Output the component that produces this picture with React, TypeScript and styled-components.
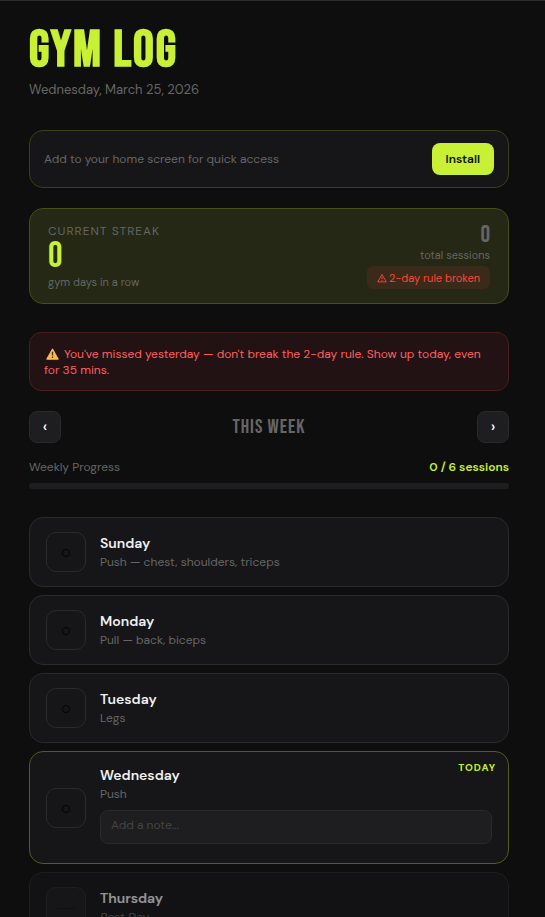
import React, { useState } from "react";
import styled, { createGlobalStyle, css } from "styled-components";

const accent = "#c8f135";
const muted = "#666666";
const line = "#2a2a2d";
const display = `"Bebas Neue", "Liberation Sans Narrow", "Liberation Sans", sans-serif`;

const GlobalStyle = createGlobalStyle`
  *, *::before, *::after { box-sizing: border-box; }
  html { background: #0e0e0e; overflow-x: hidden; scrollbar-width: none; }
  body {
    margin: 0;
    background: #0e0e0e;
    color: #f0f0f0;
    font-family: "DM Sans", Inter, "Open Sans", sans-serif;
    font-size: 13px;
    line-height: 20px;
  }
  button, textarea { font: inherit; color: inherit; margin: 0; }
  h1, h2, h3, p, ul { margin: 0; padding: 0; font-weight: inherit; }
`;

const Page = styled.main`
  border-top: 1px solid #2c2c30;
  padding: 22px 36px 40px 29px;
`;

const Header = styled.header`
  margin-bottom: 30px;
`;

const Title = styled.h1`
  font-family: ${display};
  font-size: 52px;
  font-weight: 700;
  letter-spacing: 2px;
  line-height: 56px;
  color: ${accent};
`;

const DateLine = styled.p`
  margin-top: 1px;
  color: ${muted};
`;

const Card = styled.section`
  border: 1px solid ${line};
  border-radius: 14px;
  background: #161618;
`;

const InstallCard = styled(Card)`
  display: flex;
  align-items: center;
  justify-content: space-between;
  padding: 12px 14px;
  margin-bottom: 20px;
  border-color: #383f1c;
  font-size: 12px;
  color: ${muted};
`;

const InstallButton = styled.button`
  height: 32px;
  padding: 0 14px;
  border: 0;
  border-radius: 8px;
  background: ${accent};
  color: #0e0e0e;
  font-size: 12px;
  font-weight: 600;
  cursor: pointer;
`;

const StreakCard = styled(Card)`
  display: flex;
  justify-content: space-between;
  padding: 14px 18px 13px;
  margin-bottom: 28px;
  border-color: #434f18;
  background: #242814;
  color: ${muted};
`;

const StreakSide = styled.div<{ $end?: boolean }>`
  display: flex;
  flex-direction: column;
  align-items: ${(p) => (p.$end ? "flex-end" : "flex-start")};
`;

const Overline = styled.h2`
  margin-bottom: 1px;
  font-size: 12px;
  line-height: 16px;
  letter-spacing: 1px;
  text-transform: uppercase;
`;

const Figure = styled.div<{ $large?: boolean }>`
  font-family: ${display};
  font-size: ${(p) => (p.$large ? 36 : 24)}px;
  line-height: ${(p) => (p.$large ? 34 : 24)}px;
  color: ${(p) => (p.$large ? accent : muted)};
`;

const Caption = styled.p`
  font-size: 11px;
  line-height: 16px;
`;

const BrokenBadge = styled.span`
  display: flex;
  align-items: center;
  gap: 2px;
  height: 23px;
  margin-top: 3px;
  padding: 0 10px;
  border-radius: 6px;
  background: #3a2a1a;
  color: #ff453a;
  font-size: 11px;
`;

const Alert = styled.p`
  padding: 13px 14px 12px;
  border: 1px solid #4a1d1f;
  border-radius: 12px;
  background: #221214;
  color: #ff6060;
  font-size: 12px;
  line-height: 16px;

  svg { margin: 0 5px 0 2px; vertical-align: -2px; }
`;

const WeekNav = styled.nav`
  display: flex;
  align-items: center;
  justify-content: space-between;
  margin: 20px 0 14px;
`;

const WeekTitle = styled.h2`
  font-family: ${display};
  font-size: 20px;
  letter-spacing: 1px;
  color: ${muted};
`;

const NavButton = styled.button`
  width: 32px;
  height: 32px;
  padding: 0;
  border: 1px solid ${line};
  border-radius: 8px;
  background: #1e1e21;
  color: #ffffff;
  font-size: 16px;
  font-weight: 500;
  cursor: pointer;
`;

const ProgressHead = styled.div`
  display: flex;
  justify-content: space-between;
  color: ${muted};
  font-size: 12px;
`;

const ProgressCount = styled.strong`
  color: ${accent};
  font-weight: 600;
`;

const Track = styled.div`
  height: 6px;
  margin: 6px 0 28px;
  border-radius: 3px;
  background: #1e1e21;
  overflow: hidden;
`;

const Fill = styled.div`
  height: 100%;
  background: ${accent};
`;

const DayList = styled.ul`
  display: grid;
  gap: 8px;
  list-style: none;
`;

const DayCard = styled.li<{ $today?: boolean; $rest?: boolean }>`
  position: relative;
  display: flex;
  align-items: center;
  gap: 14px;
  padding: 14px 16px;
  border: 1px solid ${line};
  border-radius: 14px;
  background: #161618;
  ${(p) => p.$today && css`border-color: #505c20;`}
  ${(p) => p.$rest && css`opacity: 0.6;`}
`;

const CheckButton = styled.button<{ $rest?: boolean }>`
  display: grid;
  place-items: center;
  flex: none;
  width: 40px;
  height: 40px;
  padding: 0;
  border: 1px solid ${line};
  border-radius: 10px;
  background: ${(p) => (p.$rest ? "#1c1c1f" : "transparent")};
  color: #000000;
  cursor: pointer;
`;

const DayBody = styled.div`
  flex: 1;
  min-width: 0;
`;

const DayName = styled.h3`
  margin-bottom: 2px;
  font-size: 14px;
  font-weight: 600;
  line-height: 18px;
`;

const Plan = styled.p<{ $rest?: boolean }>`
  color: ${muted};
  font-size: 12px;
  line-height: 16px;
  font-style: ${(p) => (p.$rest ? "italic" : "normal")};
`;

const Note = styled.textarea`
  display: block;
  width: 100%;
  height: 34px;
  margin: 8px 0 5px;
  padding: 6px 10px;
  border: 1px solid ${line};
  border-radius: 8px;
  background: #1e1e21;
  font-size: 12px;
  line-height: 16px;
  resize: none;
  overflow: hidden;

  &::placeholder { color: #444444; opacity: 1; }
`;

const TodayTag = styled.span`
  position: absolute;
  top: 10px;
  right: 12px;
  color: ${accent};
  font-size: 10px;
  font-weight: 700;
  line-height: 12px;
  letter-spacing: 1px;
`;

const WarningOutline = () => (
  <svg width="10" height="10" viewBox="0 0 11 10" fill="none" stroke="currentColor" aria-hidden="true">
    <path d="M5.5 1 10.2 9.3H.8Z" strokeLinejoin="round" />
    <path d="M5.5 3.6v2.9M5.5 7.2v1.1" strokeWidth="1.1" />
  </svg>
);

const WarningSign = () => (
  <svg width="13" height="12" viewBox="0 0 13 12" aria-hidden="true">
    <path d="M6.5.8 12.3 11.2H.7Z" fill="#ffb84d" stroke="#ffb84d" strokeLinejoin="round" />
    <path d="M6.5 3.8v3.6M6.5 8.6v1.4" stroke="#3a3a3a" strokeWidth="1.4" />
  </svg>
);

const Ring = () => (
  <svg width="10" height="12" viewBox="0 0 10 12" fill="none" stroke="currentColor" strokeWidth="0.8" aria-hidden="true">
    <circle cx="5" cy="7" r="3.6" />
  </svg>
);

const Dash = () => (
  <svg width="18" height="4" viewBox="0 0 18 4" stroke="currentColor" strokeOpacity="0.35" aria-hidden="true">
    <path d="M0 3.5h18" />
  </svg>
);

type Day = { name: string; plan: string; today?: boolean; rest?: boolean };

const days: Day[] = [
  { name: "Sunday", plan: "Push — chest, shoulders, triceps" },
  { name: "Monday", plan: "Pull — back, biceps" },
  { name: "Tuesday", plan: "Legs" },
  { name: "Wednesday", plan: "Push", today: true },
  { name: "Thursday", plan: "Rest Day", rest: true },
];

export default function App() {
  const [note, setNote] = useState("");
  const done = 0;
  const goal = 6;

  return (
    <>
      <GlobalStyle />
      <Page>
        <Header>
          <Title>GYM LOG</Title>
          <DateLine>Wednesday, March 25, 2026</DateLine>
        </Header>

        <InstallCard>
          <p>Add to your home screen for quick access</p>
          <InstallButton type="button">Install</InstallButton>
        </InstallCard>

        <StreakCard>
          <StreakSide>
            <Overline>Current Streak</Overline>
            <Figure $large>0</Figure>
            <Caption>gym days in a row</Caption>
          </StreakSide>
          <StreakSide $end>
            <Figure>0</Figure>
            <Caption>total sessions</Caption>
            <BrokenBadge>
              <WarningOutline />
              2-day rule broken
            </BrokenBadge>
          </StreakSide>
        </StreakCard>

        <Alert role="alert">
          <WarningSign />
          You've missed yesterday — don't break the 2-day rule. Show up today, even for 35 mins.
        </Alert>

        <WeekNav aria-label="Week">
          <NavButton type="button" aria-label="Previous week">‹</NavButton>
          <WeekTitle>THIS WEEK</WeekTitle>
          <NavButton type="button" aria-label="Next week">›</NavButton>
        </WeekNav>

        <ProgressHead>
          <span>Weekly Progress</span>
          <ProgressCount>
            {done} / {goal} sessions
          </ProgressCount>
        </ProgressHead>
        <Track>
          <Fill style={{ width: `${(done / goal) * 100}%` }} />
        </Track>

        <DayList>
          {days.map((day) => (
            <DayCard key={day.name} $today={day.today} $rest={day.rest}>
              <CheckButton type="button" $rest={day.rest} disabled={day.rest} aria-label={`Mark ${day.name} done`}>
                {day.rest ? <Dash /> : <Ring />}
              </CheckButton>
              <DayBody>
                <DayName>{day.name}</DayName>
                <Plan $rest={day.rest}>{day.plan}</Plan>
                {day.today && (
                  <Note
                    rows={1}
                    aria-label="Note"
                    placeholder="Add a note..."
                    value={note}
                    onChange={(e) => setNote(e.target.value)}
                  />
                )}
              </DayBody>
              {day.today && <TodayTag>TODAY</TodayTag>}
            </DayCard>
          ))}
        </DayList>
      </Page>
    </>
  );
}
